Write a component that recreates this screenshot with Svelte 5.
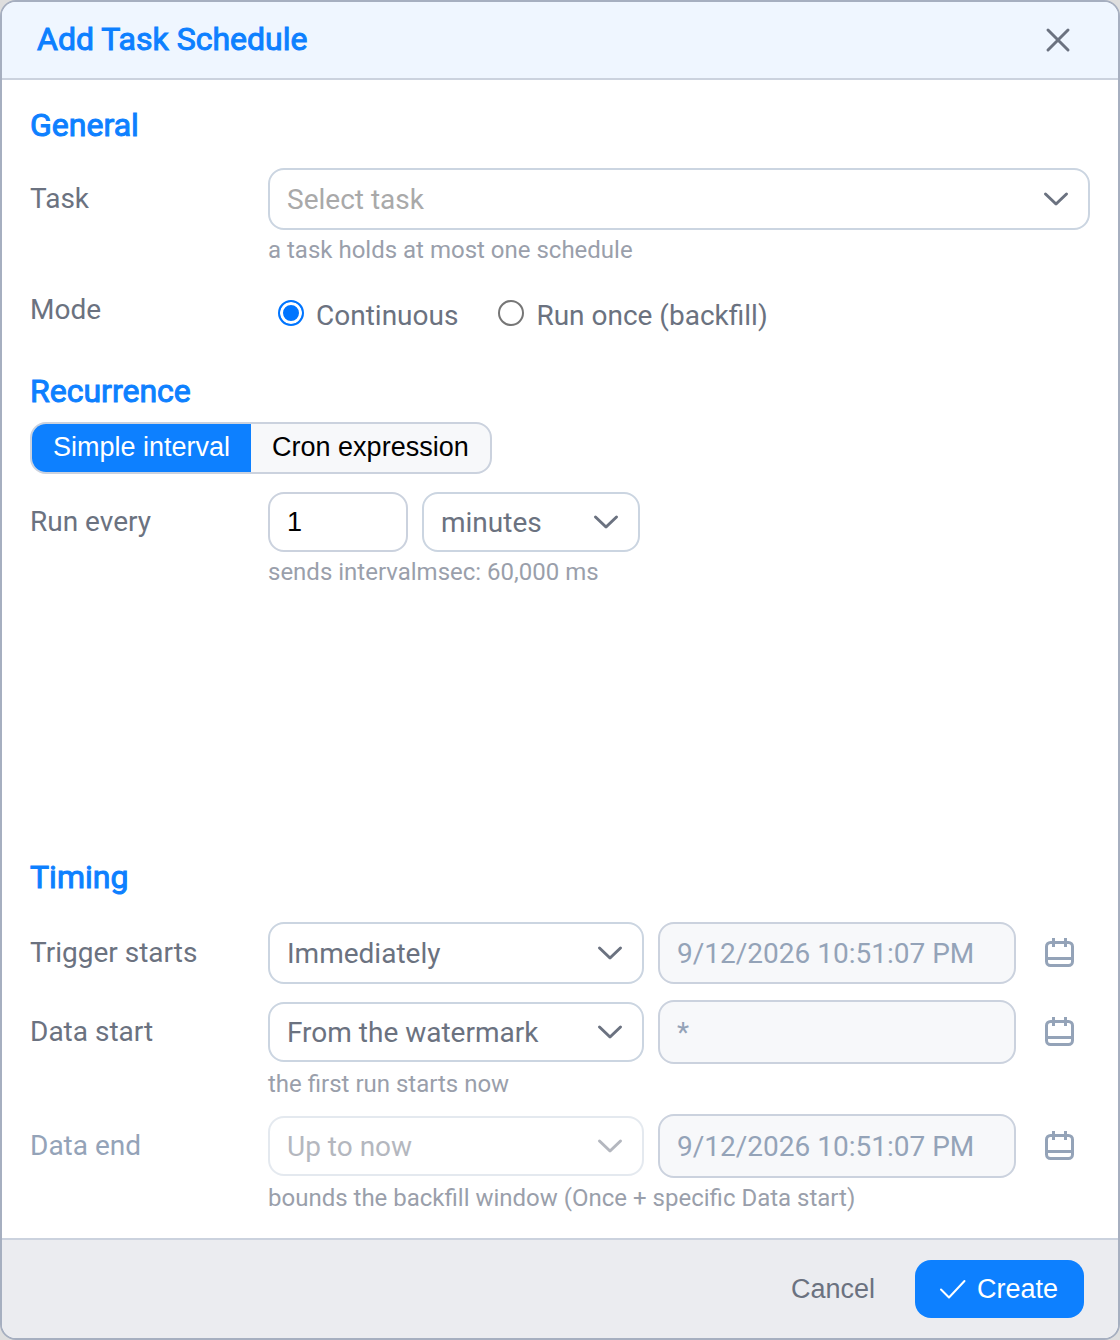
<script>
  let task = '';
  let mode = 'continuous';
  let recurrence = 'simple';
  let every = '1';
  let unit = 'minutes';
  let trigger = 'Immediately';
  let dataStart = 'From the watermark';
  let dataEnd = 'Up to now';
  const now = '9/12/2026 10:51:07 PM';

  const unitMs = { seconds: 1000, minutes: 60000, hours: 3600000, days: 86400000 };
  $: intervalMs = (Number(every) || 0) * unitMs[unit];
</script>

{#snippet chevron()}
  <svg class="chevron" viewBox="0 0 28 28" aria-hidden="true"><path d="M3.5 9 14 19 24.5 9" /></svg>
{/snippet}

{#snippet calendar(name)}
  <button type="button" class="cal" aria-label={name} disabled>
    <svg viewBox="0 0 32 32" aria-hidden="true">
      <rect x="2.5" y="5.5" width="26" height="23" rx="4" />
      <path d="M2.5 21.5h26M9.5 1v9M21.5 1v9" />
    </svg>
  </button>
{/snippet}

<div class="dialog" role="dialog" aria-labelledby="dlg-title">
  <header>
    <h1 id="dlg-title">Add Task Schedule</h1>
    <button type="button" class="close" aria-label="Close">
      <svg viewBox="0 0 32 32" aria-hidden="true"><path d="M6 7 26 27M26 7 6 27" /></svg>
    </button>
  </header>

  <form on:submit|preventDefault>
    <section class="general">
      <h2>General</h2>
      <div class="field">
        <label for="task">Task</label>
        <div class="select placeholder">
          <select id="task" bind:value={task}>
            <option value="">Select task</option>
          </select>
          {@render chevron()}
        </div>
        <p class="hint">a task holds at most one schedule</p>
      </div>
      <div class="field mode">
        <span id="mode-label">Mode</span>
        <div class="radios" role="radiogroup" aria-labelledby="mode-label">
          <label><input type="radio" name="mode" value="continuous" bind:group={mode}><span>Continuous</span></label>
          <label><input type="radio" name="mode" value="once" bind:group={mode}><span>Run once (backfill)</span></label>
        </div>
      </div>
    </section>

    <section class="recurrence">
      <h2>Recurrence</h2>
      <div class="segmented">
        <button type="button" class:active={recurrence === 'simple'} on:click={() => recurrence = 'simple'}>Simple interval</button>
        <button type="button" class:active={recurrence === 'cron'} on:click={() => recurrence = 'cron'}>Cron expression</button>
      </div>
      <div class="field">
        <label for="every">Run every</label>
        <div class="interval">
          <input id="every" class="text" type="text" inputmode="numeric" bind:value={every}>
          <div class="select">
            <select aria-label="Interval unit" bind:value={unit}>
              {#each Object.keys(unitMs) as u}
                <option>{u}</option>
              {/each}
            </select>
            {@render chevron()}
          </div>
        </div>
        <p class="hint">sends intervalmsec: {intervalMs.toLocaleString('en-US')} ms</p>
      </div>
    </section>

    <section class="timing">
      <h2>Timing</h2>
      <div class="field">
        <label for="trigger">Trigger starts</label>
        <div class="when even">
          <div class="select">
            <select id="trigger" bind:value={trigger}>
              <option>Immediately</option>
              <option>At a specific time</option>
            </select>
            {@render chevron()}
          </div>
          <input class="text date" type="text" aria-label="Trigger time" value={now} disabled>
          {@render calendar('Pick trigger time')}
        </div>
      </div>
      <div class="field">
        <label for="data-start">Data start</label>
        <div class="when">
          <div class="select">
            <select id="data-start" bind:value={dataStart}>
              <option>From the watermark</option>
              <option>From a specific time</option>
            </select>
            {@render chevron()}
          </div>
          <input class="text date" type="text" aria-label="Data start time" value="*" disabled>
          {@render calendar('Pick data start')}
        </div>
        <p class="hint">the first run starts now</p>
      </div>
      <div class="field off">
        <label for="data-end">Data end</label>
        <div class="when">
          <div class="select disabled">
            <select id="data-end" bind:value={dataEnd} disabled>
              <option>Up to now</option>
            </select>
            {@render chevron()}
          </div>
          <input class="text date" type="text" aria-label="Data end time" value={now} disabled>
          {@render calendar('Pick data end')}
        </div>
        <p class="hint">bounds the backfill window (Once + specific Data start)</p>
      </div>
    </section>
  </form>

  <footer>
    <button type="button" class="cancel">Cancel</button>
    <button type="button" class="create">
      <svg viewBox="0 0 28 28" aria-hidden="true"><path d="M2 14.5 10 22.5 25.5 6" /></svg>
      Create
    </button>
  </footer>
</div>

<style>
:global(body) { margin:0; background:#dedede; }
.dialog, .dialog * { box-sizing:border-box; }
.dialog { border:2px solid #a6afc0; border-radius:16px; background:#fff; overflow:hidden; color:#6b7280; font:28px/32px Roboto, sans-serif; }
button { font:27px/30px "Liberation Sans", Arial, sans-serif; border:0; background:none; cursor:pointer; padding:0; }
svg { display:block; fill:none; stroke:currentColor; }
h1, h2 { margin:0; font-size:32px; line-height:40px; font-weight:400; color:#0d80ff; -webkit-text-stroke:1px #0d80ff; }
p { margin:0; }

header { display:flex; align-items:center; justify-content:space-between; padding:17px 44px 19px 35px; background:#eff6ff; border-bottom:2px solid #cbd2de; }
.close { color:#6b7280; }
.close svg { width:32px; height:32px; stroke-width:3; stroke-linecap:round; }

form { padding:25px 28px 26px; }
.field { display:grid; grid-template-columns:238px minmax(0, 1fr); align-items:center; }
.hint { grid-column:2; font-size:24px; line-height:28px; padding-top:6px; color:#9a9fab; }
.general h2 { margin-bottom:23px; }
.mode { margin-top:30px; align-items:start; }
.radios { display:flex; gap:40px; padding-left:10px; }
.radios label { display:flex; gap:12px; }
.radios span { padding-top:6px; }
.radios input { appearance:none; margin:6px 0 0; width:26px; height:26px; border:2px solid #767676; border-radius:50%; background:#fff; }
.radios input:checked { border-color:#0075ff; background:#0075ff; box-shadow:inset 0 0 0 3px #fff; }

.recurrence { margin-top:39px; min-height:486px; }
.segmented { display:flex; width:fit-content; margin:11px 0 18px; border:2px solid #cbd2de; border-radius:16px; overflow:hidden; background:#f7f8fa; }
.segmented button { padding:8px 21px 10px; color:#000; }
.segmented .active { background:#0d80ff; color:#fff; }
.interval { display:grid; grid-template-columns:140px 218px; gap:14px; }

.text, select { width:100%; min-width:0; height:60px; border:2px solid #cbd2de; border-radius:16px; background:#fff; padding:0 17px; }
.text { font:27px "Liberation Sans", Arial, sans-serif; color:#000; }
.text.date { height:64px; font:28px Roboto, sans-serif; background:#f7f8fa; color:#94a3b8; }
.select { display:grid; align-items:center; }
.select > :global(*) { grid-area:1 / 1; }
select { appearance:none; font:28px Roboto, sans-serif; color:#6b7280; border-color:#cbd5e1; opacity:1; }
.placeholder select, .even select, .even .text.date { height:62px; }
.placeholder select { color:#a9a9a9; }
.chevron { width:28px; height:28px; justify-self:end; margin-right:20px; stroke-width:3; stroke-linecap:round; stroke-linejoin:round; pointer-events:none; }
.select.disabled { opacity:.5; }

.timing h2 { margin-bottom:25px; }
.timing .field + .field { margin-top:16px; }
.when { display:grid; grid-template-columns:376fr 358fr 60px; gap:14px; align-items:center; }
.off label { color:#94a3b8; }
.cal { justify-self:center; color:#94a3b8; }
.cal svg { width:32px; height:32px; stroke-width:3; }

footer { display:flex; justify-content:flex-end; gap:40px; padding:20px 34px; background:#ebecf0; border-top:2px solid #cbd2de; }
.cancel { color:#6b7280; }
.create { display:flex; align-items:center; gap:10px; padding:14px 26px 14px 24px; border-radius:16px; background:#0d80ff; color:#fff; }
.create svg { width:28px; height:28px; stroke-width:2; stroke-linecap:round; stroke-linejoin:round; }
</style>
